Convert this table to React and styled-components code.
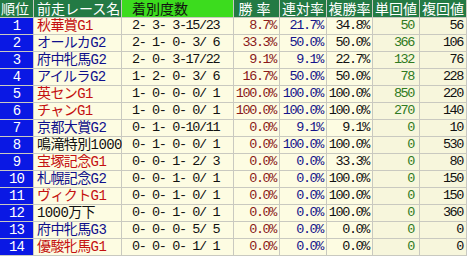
import React from 'react'
import styled, { createGlobalStyle } from 'styled-components'

const GlobalStyle = createGlobalStyle`
  body{
    margin:0;
    background:#ffffff;
  }
`

const rows = [
  ['1', '秋華賞G1', 'red', '2- 3- 3-15/23', '8.7%', '21.7%', '34.8%', '50', '56'],
  ['2', 'オールカG2', 'blue', '2- 1- 0- 3/ 6', '33.3%', '50.0%', '50.0%', '366', '106'],
  ['3', '府中牝馬G2', 'blue', '2- 0- 3-17/22', '9.1%', '9.1%', '22.7%', '132', '76'],
  ['4', 'アイルラG2', 'blue', '1- 2- 0- 3/ 6', '16.7%', '50.0%', '50.0%', '78', '228'],
  ['5', '英センG1', 'red', '1- 0- 0- 0/ 1', '100.0%', '100.0%', '100.0%', '850', '220'],
  ['6', 'チャンG1', 'red', '1- 0- 0- 0/ 1', '100.0%', '100.0%', '100.0%', '270', '140'],
  ['7', '京都大賞G2', 'blue', '0- 1- 0-10/11', '0.0%', '9.1%', '9.1%', '0', '10'],
  ['8', '鳴滝特別1000', 'black', '0- 1- 0- 0/ 1', '0.0%', '100.0%', '100.0%', '0', '530'],
  ['9', '宝塚記念G1', 'red', '0- 0- 1- 2/ 3', '0.0%', '0.0%', '33.3%', '0', '80'],
  ['10', '札幌記念G2', 'blue', '0- 0- 1- 0/ 1', '0.0%', '0.0%', '100.0%', '0', '150'],
  ['11', 'ヴィクトG1', 'red', '0- 0- 1- 0/ 1', '0.0%', '0.0%', '100.0%', '0', '150'],
  ['12', '1000万下', 'black', '0- 0- 1- 0/ 1', '0.0%', '0.0%', '100.0%', '0', '360'],
  ['13', '府中牝馬G3', 'blue', '0- 0- 0- 5/ 5', '0.0%', '0.0%', '0.0%', '0', '0'],
  ['14', '優駿牝馬G1', 'red', '0- 0- 0- 1/ 1', '0.0%', '0.0%', '0.0%', '0', '0'],
]

const nameColors = {
  red: '#c41010',
  blue: '#10108c',
  black: '#111111',
}

function App() {
  return (
    <>
      <GlobalStyle />
      <Table>
        <HeadCell align="left" pad="1px">順位</HeadCell>
        <HeadCell align="left" pad="3px">前走レース名</HeadCell>
        <HeadCell align="left" pad="10px" bright>着別度数</HeadCell>
        <HeadCell align="center" spread>勝率</HeadCell>
        <HeadCell align="center">連対率</HeadCell>
        <HeadCell align="center">複勝率</HeadCell>
        <HeadCell align="center">単回値</HeadCell>
        <HeadCell align="center">複回値</HeadCell>

        {rows.map((r) => (
          <React.Fragment key={r[0]}>
            <RankCell>{r[0]}</RankCell>
            <NameCell color={nameColors[r[2]]}>{r[1]}</NameCell>
            <RecordCell>{r[3]}</RecordCell>
            <NumCell color="#8a1a1a">{r[4]}</NumCell>
            <NumCell color="#14148a">{r[5]}</NumCell>
            <NumCell color="#111111">{r[6]}</NumCell>
            <NumCell color="#2f7a22" tint pad="5px">{r[7]}</NumCell>
            <NumCell color="#111111" tint>{r[8]}</NumCell>
          </React.Fragment>
        ))}
      </Table>
    </>
  )
}

export default App

const Table = styled.div`
  display:grid;
  grid-template-columns:33px 87px 111px 45px 46px 45px 46px 46px;
  grid-template-rows:17px;
  grid-auto-rows:16px;
  gap:1px;
  width:max-content;
  padding:0 1px 1px 0;
  background:#c9c9c0;
`

const HeadCell = styled.div`
  background:${(p) => (p.bright ? '#3cdc1e' : '#237a44')};
  color:${(p) => (p.bright ? '#111111' : '#ffffff')};
  font-family:"Noto Sans CJK JP", sans-serif;
  font-size:14px;
  line-height:17px;
  text-align:${(p) => p.align};
  padding-left:${(p) => p.pad || '0'};
  letter-spacing:${(p) => (p.spread ? '4px' : '0')};
  white-space:nowrap;
`

const RankCell = styled.div`
  background:#0a18e4;
  color:#ffffff;
  font-family:"Liberation Mono", monospace;
  font-size:14px;
  letter-spacing:-1px;
  line-height:16px;
  text-align:center;
`

const NameCell = styled.div`
  background:#fdfce2;
  color:${(p) => p.color};
  font-family:"Liberation Mono", "Noto Sans CJK JP", monospace;
  font-size:14px;
  letter-spacing:-0.6px;
  line-height:16px;
  padding-left:3px;
  white-space:nowrap;
`

const RecordCell = styled.div`
  background:#fdfce2;
  color:#111111;
  font-family:"Liberation Mono", monospace;
  font-size:13.5px;
  letter-spacing:-1.4px;
  line-height:16px;
  padding-left:10px;
  white-space:pre;
`

const NumCell = styled.div`
  background:${(p) => (p.tint ? '#f7f6dc' : '#fdfce2')};
  color:${(p) => p.color};
  font-family:"Liberation Mono", monospace;
  font-size:13.5px;
  letter-spacing:-1.4px;
  line-height:16px;
  text-align:right;
  padding-right:${(p) => p.pad || '3px'};
  white-space:pre;
`
